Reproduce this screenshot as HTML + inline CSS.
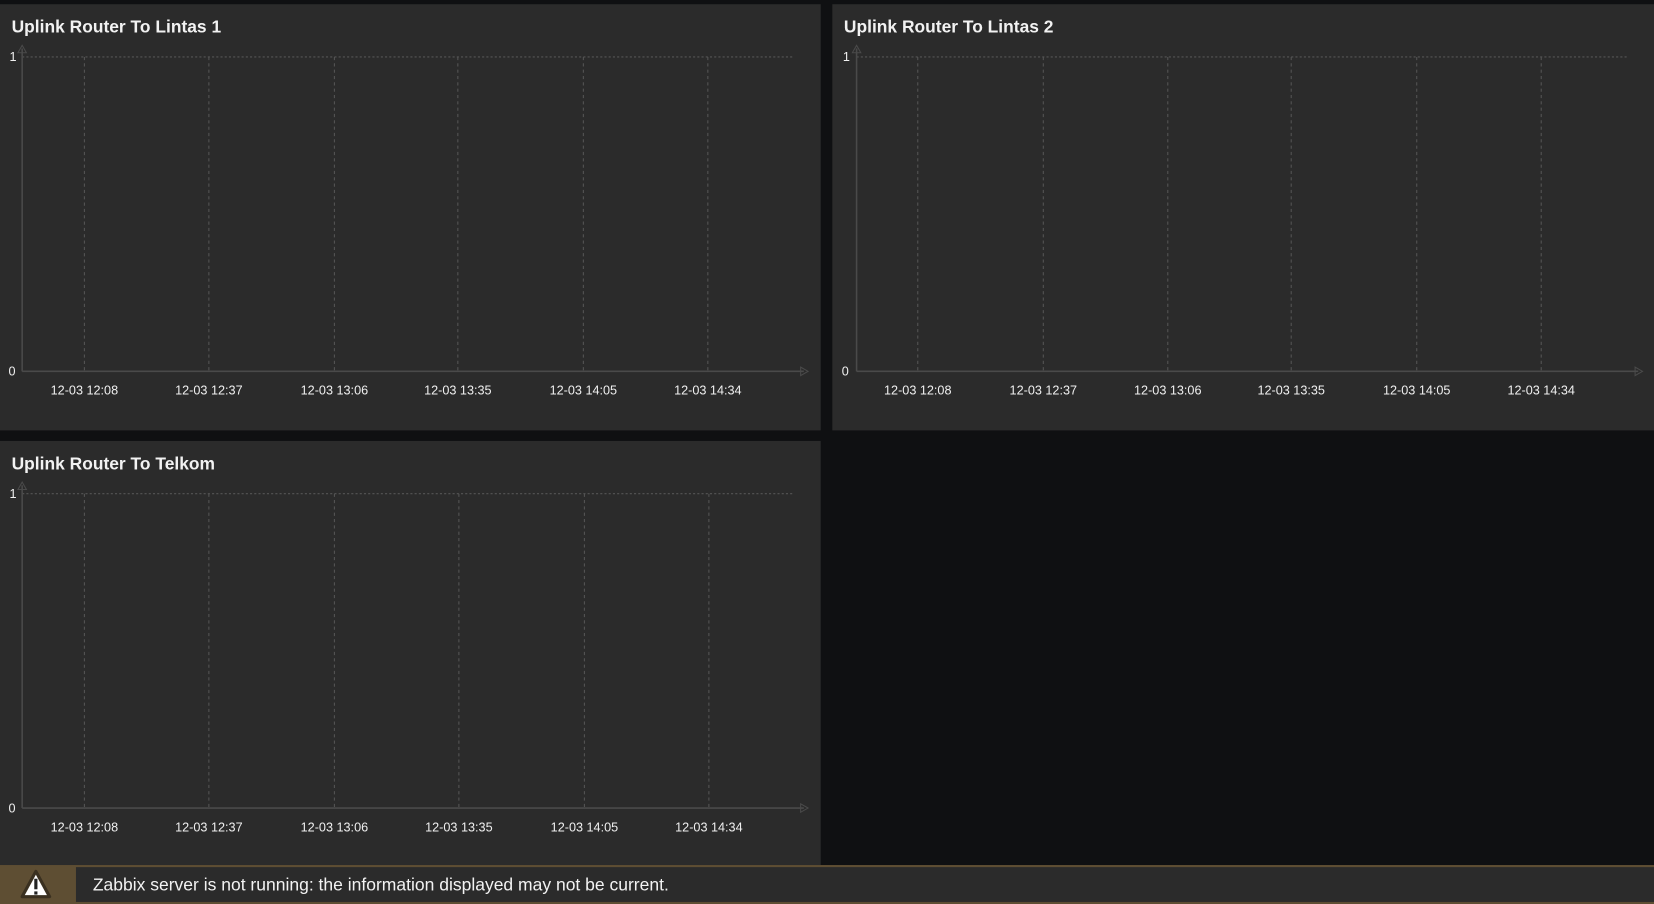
<!DOCTYPE html>
<html><head><meta charset="utf-8"><style>
html,body{margin:0;padding:0;background:#0f1012;width:1654px;height:904px;overflow:hidden}
#w{position:absolute;left:0;top:0;width:1568px;height:857px;transform:scale(1.0549);transform-origin:0 0;font-family:"Liberation Sans",Arial,sans-serif}
.p{position:absolute;background:#2b2b2b}
.t{position:absolute;left:11px;top:13px;color:#f2f2f2;font-weight:bold;font-size:16.5px}
svg{position:absolute;left:0;top:0}
svg text{font-family:"Liberation Sans",Arial,sans-serif;font-size:12px;fill:#f0f0f0}
</style></head><body><div id="w">
<div class="p" style="left:0;top:4px;width:778px;height:404px"><div class="t">Uplink Router To Lintas 1</div>
<svg width="778" height="404"><g id="c">
<line x1="21" y1="50" x2="752" y2="50" stroke="#555" stroke-dasharray="2,2"/>
<g stroke="#555" stroke-dasharray="3,3"><line x1="80" y1="50" x2="80" y2="348"/><line x1="198" y1="50" x2="198" y2="348"/><line x1="317" y1="50" x2="317" y2="348"/><line x1="434" y1="50" x2="434" y2="348"/><line x1="553" y1="50" x2="553" y2="348"/><line x1="671" y1="50" x2="671" y2="348"/></g>
<line x1="21" y1="42" x2="21" y2="348" stroke="#4a4a4a" stroke-width="1.5"/>
<line x1="21" y1="348" x2="762" y2="348" stroke="#4a4a4a" stroke-width="1.5"/>
<path d="M17 46 L21 39 L25 46 Z" fill="none" stroke="#4a4a4a"/>
<path d="M759 344 L766 348 L759 352 Z" fill="none" stroke="#4a4a4a"/>
<text x="9" y="54">1</text><text x="8" y="352">0</text>
<g text-anchor="middle"><text x="80" y="370">12-03 12:08</text><text x="198" y="370">12-03 12:37</text><text x="317" y="370">12-03 13:06</text><text x="434" y="370">12-03 13:35</text><text x="553" y="370">12-03 14:05</text><text x="671" y="370">12-03 14:34</text></g>
</g></svg></div>
<div class="p" style="left:789px;top:4px;width:779px;height:404px"><div class="t">Uplink Router To Lintas 2</div>
<svg width="779" height="404"><g transform="translate(2,0)">
<line x1="21" y1="50" x2="752" y2="50" stroke="#555" stroke-dasharray="2,2"/>
<g stroke="#555" stroke-dasharray="3,3"><line x1="79" y1="50" x2="79" y2="348"/><line x1="198" y1="50" x2="198" y2="348"/><line x1="316" y1="50" x2="316" y2="348"/><line x1="433" y1="50" x2="433" y2="348"/><line x1="552" y1="50" x2="552" y2="348"/><line x1="670" y1="50" x2="670" y2="348"/></g>
<line x1="21" y1="42" x2="21" y2="348" stroke="#4a4a4a" stroke-width="1.5"/>
<line x1="21" y1="348" x2="762" y2="348" stroke="#4a4a4a" stroke-width="1.5"/>
<path d="M17 46 L21 39 L25 46 Z" fill="none" stroke="#4a4a4a"/>
<path d="M759 344 L766 348 L759 352 Z" fill="none" stroke="#4a4a4a"/>
<text x="8" y="54">1</text><text x="7" y="352">0</text>
<g text-anchor="middle"><text x="79" y="370">12-03 12:08</text><text x="198" y="370">12-03 12:37</text><text x="316" y="370">12-03 13:06</text><text x="433" y="370">12-03 13:35</text><text x="552" y="370">12-03 14:05</text><text x="670" y="370">12-03 14:34</text></g>
</g></svg></div>
<div class="p" style="left:0;top:418px;width:778px;height:402px"><div class="t">Uplink Router To Telkom</div>
<svg width="778" height="402">
<line x1="21" y1="50" x2="752" y2="50" stroke="#555" stroke-dasharray="2,2"/>
<g stroke="#555" stroke-dasharray="3,3"><line x1="80" y1="50" x2="80" y2="348"/><line x1="198" y1="50" x2="198" y2="348"/><line x1="317" y1="50" x2="317" y2="348"/><line x1="435" y1="50" x2="435" y2="348"/><line x1="554" y1="50" x2="554" y2="348"/><line x1="672" y1="50" x2="672" y2="348"/></g>
<line x1="21" y1="42" x2="21" y2="348" stroke="#4a4a4a" stroke-width="1.5"/>
<line x1="21" y1="348" x2="762" y2="348" stroke="#4a4a4a" stroke-width="1.5"/>
<path d="M17 46 L21 39 L25 46 Z" fill="none" stroke="#4a4a4a"/>
<path d="M759 344 L766 348 L759 352 Z" fill="none" stroke="#4a4a4a"/>
<text x="9" y="54">1</text><text x="8" y="352">0</text>
<g text-anchor="middle"><text x="80" y="370">12-03 12:08</text><text x="198" y="370">12-03 12:37</text><text x="317" y="370">12-03 13:06</text><text x="435" y="370">12-03 13:35</text><text x="554" y="370">12-03 14:05</text><text x="672" y="370">12-03 14:34</text></g>
</svg></div>
<div style="position:absolute;left:0;top:820px;width:1568px;height:37px;background:#5e4e33">
<div style="position:absolute;left:72px;top:2px;right:0;bottom:2px;background:#2b2b2b;color:#f2f2f2;font-size:16.6px;line-height:33px;padding-left:16px">Zabbix server is not running: the information displayed may not be current.</div>
<svg width="72" height="37"><path d="M34 6 L47 30 L21 30 Z" fill="#fff" stroke="#3a3020" stroke-width="3" stroke-linejoin="round"/><rect x="32.5" y="13" width="3" height="10" fill="#222"/><rect x="32.5" y="25" width="3" height="3" fill="#222"/></svg>
</div>
</div></body></html>
